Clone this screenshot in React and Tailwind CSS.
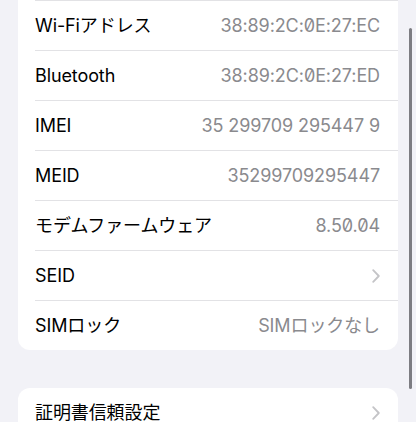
import React from 'react';

const FONT = { fontFamily: 'Inter, "Noto Sans CJK JP", sans-serif' };

const Chevron = () => (
    <svg width="8" height="14" viewBox="0 0 8 14" fill="none" className="shrink-0">
        <path d="M1.2 1.2 L6.8 7 L1.2 12.8" stroke="#c4c4c7" strokeWidth="1.8" strokeLinecap="round" strokeLinejoin="round" />
    </svg>
);

const Row = ({ label, value, slashed, chevron, last }) => (
    <div className="pl-[17px]">
        <div className={`flex items-center justify-between pr-[18px] ${last ? 'h-[49px]' : 'h-[50px] border-b border-[#e2e2e5]'}`}>
            <span className="text-[18px] text-black tracking-[-0.1px]">{label}</span>
            {chevron ? (
                <Chevron />
            ) : (
                <span className={`text-[18px] text-[#8a8a8e] tracking-[-0.1px] ${slashed ? 'slashed-zero' : ''}`}>{value}</span>
            )}
        </div>
    </div>
);

export default function App() {
    const rows = [
        { label: 'Wi-Fiアドレス', value: '38:89:2C:0E:27:EC', slashed: true },
        { label: 'Bluetooth', value: '38:89:2C:0E:27:ED', slashed: true },
        { label: 'IMEI', value: '35 299709 295447 9' },
        { label: 'MEID', value: '35299709295447' },
        { label: 'モデムファームウェア', value: '8.50.04', slashed: true },
        { label: 'SEID', chevron: true },
        { label: 'SIMロック', value: 'SIMロックなし' },
    ];

    return (
        <div className="relative w-[416px] h-[422px] overflow-hidden bg-[#f2f2f7]" style={FONT}>
            <div className="mx-[18px] bg-white rounded-b-[12px]">
                <div className="ml-[17px] h-px bg-[#e2e2e5]" />
                {rows.map((r, i) => (
                    <Row key={r.label} {...r} last={i === rows.length - 1} />
                ))}
            </div>

            <div className="mt-[38px] mx-[18px] bg-white rounded-[12px]">
                <Row label="証明書信頼設定" chevron last />
            </div>

            {/* scroll indicator */}
            <div className="absolute left-[409px] top-[28px] w-[3px] h-[361px] rounded-full bg-[#7d7d82]" />
        </div>
    );
}
